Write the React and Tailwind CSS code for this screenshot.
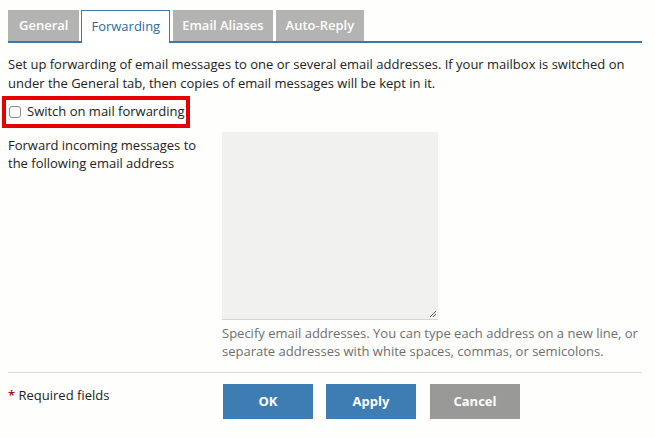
import React from 'react';

const tabs = [
  { label: 'General', cls: 'px-[11px]' },
  { label: 'Forwarding', cls: 'ml-[2px] px-[9px]' },
  { label: 'Email Aliases', cls: 'ml-[3px] px-[9px]' },
  { label: 'Auto-Reply', cls: 'ml-[3px] px-[10px]' },
];

const App = () => {
  return (
    <div
      className="w-[655px] h-[438px] bg-[#fefefd] text-[13px] text-[#222] overflow-hidden"
      style={{ fontFamily: '"Open Sans", "Liberation Sans", sans-serif' }}
    >
      <div className="pl-[8px] pr-[13px] pt-[10px]">
        {/* Tabs */}
        <div className="flex items-end border-b-2 border-[#3b77a8]">
          {tabs.map((tab) =>
            tab.label === 'Forwarding' ? (
              <div
                key={tab.label}
                className={`${tab.cls} h-[33px] -mb-[2px] flex items-center bg-white border border-b-0 border-[#3b77a8] text-[#2f6a9c] text-[13px]`}
              >
                {tab.label}
              </div>
            ) : (
              <div
                key={tab.label}
                className={`${tab.cls} h-[31px] flex items-center bg-[#b3b3b1] text-white font-semibold text-[13px]`}
              >
                {tab.label}
              </div>
            )
          )}
        </div>

        {/* Intro */}
        <p className="mt-[12px] leading-[19px]">
          Set up forwarding of email messages to one or several email addresses. If your mailbox is switched on
          under the General tab, then copies of email messages will be kept in it.
        </p>
      </div>

      {/* Checkbox */}
      <div className="ml-[2px] mt-[3px] w-[188px] h-[32px] border-4 border-[#e60000] flex items-center pl-[3px]">
        <span className="w-[12px] h-[12px] rounded-[3px] border border-[#8a8a8a] bg-white mr-[6px]" />
        <span>Switch on mail forwarding</span>
      </div>

      {/* Form row */}
      <div className="flex pl-[8px] mt-[4px]">
        <div className="w-[214px] pt-[4px] leading-[18px]">
          Forward incoming messages to
          <br />
          the following email address
        </div>
        <div>
          <div className="relative w-[216px] h-[188px] bg-[#f1f2f0] border-b border-[#d6d6d6]">
            <svg className="absolute right-[1px] bottom-[1px]" width="8" height="8" viewBox="0 0 8 8">
              <path d="M7 1 L1 7 M7 4 L4 7" stroke="#555" strokeWidth="1" />
            </svg>
          </div>
          <p className="mt-[4px] leading-[18px] text-[#6e6e6e]">
            Specify email addresses. You can type each address on a new line, or
            <br />
            separate addresses with white spaces, commas, or semicolons.
          </p>
        </div>
      </div>

      {/* Footer */}
      <div className="ml-[8px] mr-[13px] mt-[12px] border-t border-[#dcdcdc]" />
      <div className="flex pl-[8px] mt-[11px]">
        <div className="w-[215px] pt-[2px]">
          <span className="text-[#b00020] font-semibold">*</span> Required fields
        </div>
        <div className="flex">
          <button className="w-[90px] h-[35px] bg-[#3d7db3] text-white font-bold text-[13px]">OK</button>
          <button className="ml-[13px] w-[90px] h-[35px] bg-[#3d7db3] text-white font-bold text-[13px]">Apply</button>
          <button className="ml-[14px] w-[90px] h-[35px] bg-[#999997] text-white font-bold text-[13px]">Cancel</button>
        </div>
      </div>
    </div>
  );
};

export default App;
